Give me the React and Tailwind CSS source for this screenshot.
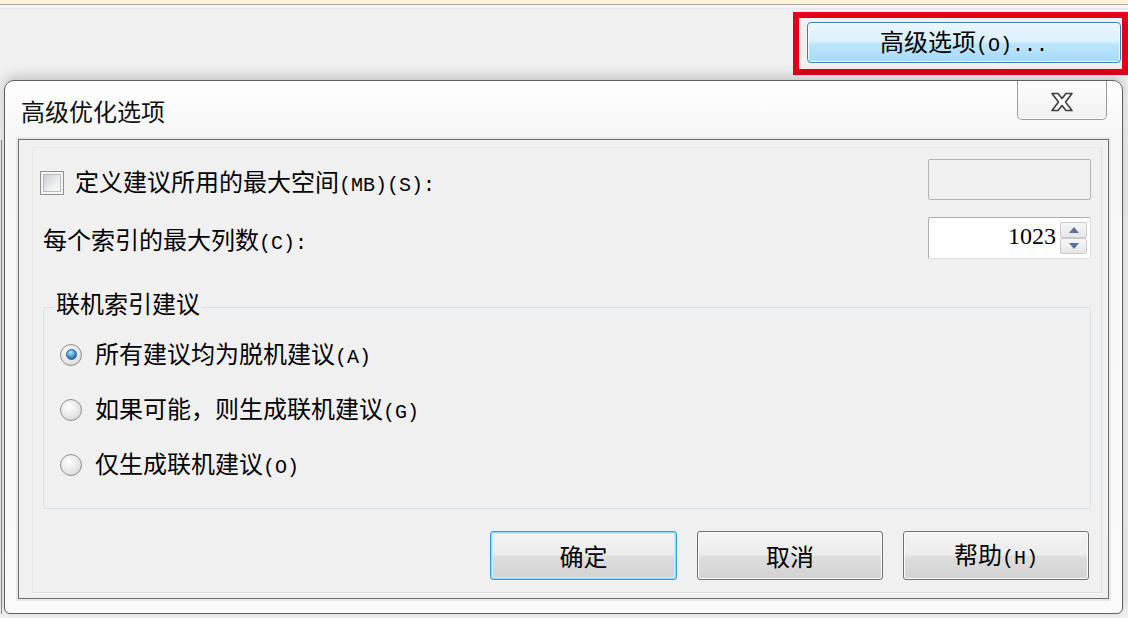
import React from "react";

const CJK = "font-['Noto_Sans_CJK_SC','Noto_Sans',sans-serif]";
const ASCII = "font-['Liberation_Mono',monospace] text-[20px]";

function Checkbox() {
  return (
    <div className="w-[24px] h-[24px] border border-[#8e8f8f] bg-[#f4f4f4] p-[2px] shrink-0">
      <div className="w-full h-full border border-[#b7b9bb] bg-[linear-gradient(135deg,#c9cdd3,#eceef0_60%,#f8f8f8)]" />
    </div>
  );
}

function Radio({ checked }) {
  return (
    <div className="w-[22px] h-[22px] rounded-full border border-[#8e8f8f] bg-[radial-gradient(circle_at_40%_35%,#ffffff,#e6e6e6_55%,#cdcdcd)] flex items-center justify-center shrink-0">
      {checked && (
        <div className="w-[11px] h-[11px] rounded-full border border-[#1d5a8f] bg-[radial-gradient(circle_at_40%_30%,#b9e6fb,#3b8fcc_55%,#1a4f86)]" />
      )}
    </div>
  );
}

function SpinButton({ up }) {
  return (
    <div className="w-[27px] h-[16px] border border-[#c7cace] rounded-[2px] bg-[linear-gradient(#f7f7f7,#e6e6e6)] flex items-center justify-center">
      <svg width="10" height="6" viewBox="0 0 10 6">
        {up ? (
          <path d="M0 6 L5 0 L10 6 Z" fill="#5a6f9c" />
        ) : (
          <path d="M0 0 L10 0 L5 6 Z" fill="#5a6f9c" />
        )}
      </svg>
    </div>
  );
}

function DialogButton({ children, primary }) {
  return (
    <button
      className={
        primary
          ? "h-[49px] w-[187px] rounded-[3px] border border-[#3a9ad6] bg-[linear-gradient(#f4f4f4_0%,#ececec_48%,#dedede_52%,#d2d2d2_100%)] shadow-[inset_0_0_0_1px_#8fdcf8,inset_0_0_0_2px_#c9eefb] text-[24px] leading-none text-black"
          : "h-[49px] w-[186px] rounded-[3px] border border-[#707070] bg-[linear-gradient(#f4f4f4_0%,#ececec_48%,#dedede_52%,#d2d2d2_100%)] shadow-[inset_0_0_0_1px_#fbfbfb] text-[24px] leading-none text-black"
      }
    >
      {children}
    </button>
  );
}

export default function App() {
  return (
    <div className={`w-[1128px] h-[618px] bg-[#f0f0f0] overflow-hidden flex flex-col text-black ${CJK}`}>
      {/* strip of the window behind */}
      <div className="h-[4px] bg-[#fbf5d6] shrink-0" />
      <div className="h-[1px] bg-[#a8a8a8] shrink-0" />
      <div className="h-[4px] bg-[#f6f6f8] border-b border-[#e6e6ee] shrink-0" />

      {/* toolbar with the highlighted button */}
      <div className="flex justify-end pt-[3px] shrink-0">
        <div className="w-[335px] h-[63px] border-[6px] border-[#e2001a] pl-[8px] pt-[4px] pr-[1px]">
          <button className="w-full h-[41px] rounded-[4px] border border-[#3c7fb1] bg-[linear-gradient(#eaf6fd_0%,#d9f0fc_48%,#bee6fd_52%,#a7d9f5_100%)] shadow-[inset_0_0_0_1px_#f5fbfe] text-[24px] leading-none text-black">
            高级选项<span className={ASCII}>(O)...</span>
          </button>
        </div>
      </div>

      {/* dialog */}
      <div className="flex mt-[5px] shrink-0">
        <div className="w-[4px] shrink-0 flex pl-[1px]">
          <div className="w-[1px] bg-[#8a8a8a] mt-[60px]" />
        </div>
        <div className="w-[1119px] h-[534px] rounded-t-[10px] rounded-b-[6px] border border-[#5f5f5f] bg-[linear-gradient(#ffffff,#f7f7f7_10%,#fafafa)] shadow-[0_-4px_12px_rgba(0,0,0,0.18)] flex flex-col shrink-0">
          {/* title bar */}
          <div className="h-[58px] flex justify-between items-start shrink-0">
            <div className="pl-[16px] pt-[18px] text-[24px] leading-none text-[#111]">高级优化选项</div>
            <div className="mr-[15px] w-[90px] h-[39px] rounded-b-[5px] border border-t-0 border-[#9a9a9a] bg-[linear-gradient(#fdfdfd,#f1f1f1)] shadow-[inset_0_-1px_0_#ffffff] flex items-center justify-center pt-[3px]">
              <svg width="24" height="20" viewBox="0 0 24 20">
                <path
                  d="M2 1.5 H8 L12 6.5 L16 1.5 H22 L15.5 10 L22 18.5 H16 L12 13.5 L8 18.5 H2 L8.5 10 Z"
                  fill="#ffffff"
                  stroke="#3d3d3d"
                  strokeWidth="1.6"
                  strokeLinejoin="round"
                />
              </svg>
            </div>
          </div>

          {/* content */}
          <div className="mx-[13px] h-[460px] border border-[#6e6e6e] bg-[#f0f0f0] shadow-[0_0_0_2px_#e8e8e8] flex flex-col pl-[13px] pr-[6px] pt-[7px] pb-[5px] shrink-0">
            <div className="flex-1 border border-[#e9e9e9] border-b-[#dcdcdc] border-r-[#dcdcdc] shadow-[0_1px_0_#ffffff] flex flex-col pl-[7px] pr-[10px]">
              {/* max space row */}
              <div className="mt-[11px] h-[41px] flex items-center justify-between shrink-0">
                <div className="flex items-center mt-[6px]">
                  <Checkbox />
                  <span className="ml-[11px] text-[24px] leading-none">
                    定义建议所用的最大空间<span className={ASCII}>(MB)(S):</span>
                  </span>
                </div>
                <div className="w-[163px] h-[41px] rounded-[2px] border border-[#b1b5b9] bg-[#f0f0f0]" />
              </div>

              {/* max columns row */}
              <div className="mt-[17px] h-[42px] flex items-center justify-between shrink-0">
                <span className="ml-[3px] mt-[4px] text-[24px] leading-none">
                  每个索引的最大列数<span className={ASCII}>(C):</span>
                </span>
                <div className="w-[163px] h-[42px] rounded-[2px] border border-[#abadb3] border-b-[#dbdfe6] border-r-[#dbdfe6] bg-white flex items-center">
                  <div className="flex-1 text-right pr-[4px] font-['Liberation_Serif',serif] text-[24px] leading-none pb-[5px]">1023</div>
                  <div className="flex flex-col mr-[3px]">
                    <SpinButton up />
                    <SpinButton />
                  </div>
                </div>
              </div>

              {/* group */}
              <fieldset className="mt-[32px] ml-[3px] h-[218px] rounded-[3px] border border-[#d5dfe5] px-0 pb-0 pt-[4px] shrink-0">
                <legend className="ml-[10px] px-[2px] pb-[8px] text-[24px] leading-[24px]">联机索引建议</legend>
                <div className="flex flex-col pl-[16px]">
                  <div className="h-[55px] flex items-center">
                    <Radio checked />
                    <span className="ml-[13px] text-[24px] leading-none">
                      所有建议均为脱机建议<span className={ASCII}>(A)</span>
                    </span>
                  </div>
                  <div className="h-[55px] flex items-center">
                    <Radio />
                    <span className="ml-[13px] text-[24px] leading-none">
                      如果可能，则生成联机建议<span className={ASCII}>(G)</span>
                    </span>
                  </div>
                  <div className="h-[55px] flex items-center">
                    <Radio />
                    <span className="ml-[13px] text-[24px] leading-none">
                      仅生成联机建议<span className={ASCII}>(O)</span>
                    </span>
                  </div>
                </div>
              </fieldset>

              {/* buttons */}
              <div className="mt-[22px] mr-[2px] flex justify-end gap-[20px] shrink-0">
                <DialogButton primary>确定</DialogButton>
                <DialogButton>取消</DialogButton>
                <DialogButton>
                  帮助<span className={ASCII}>(H)</span>
                </DialogButton>
              </div>
            </div>
          </div>
        </div>
      </div>
    </div>
  );
}
